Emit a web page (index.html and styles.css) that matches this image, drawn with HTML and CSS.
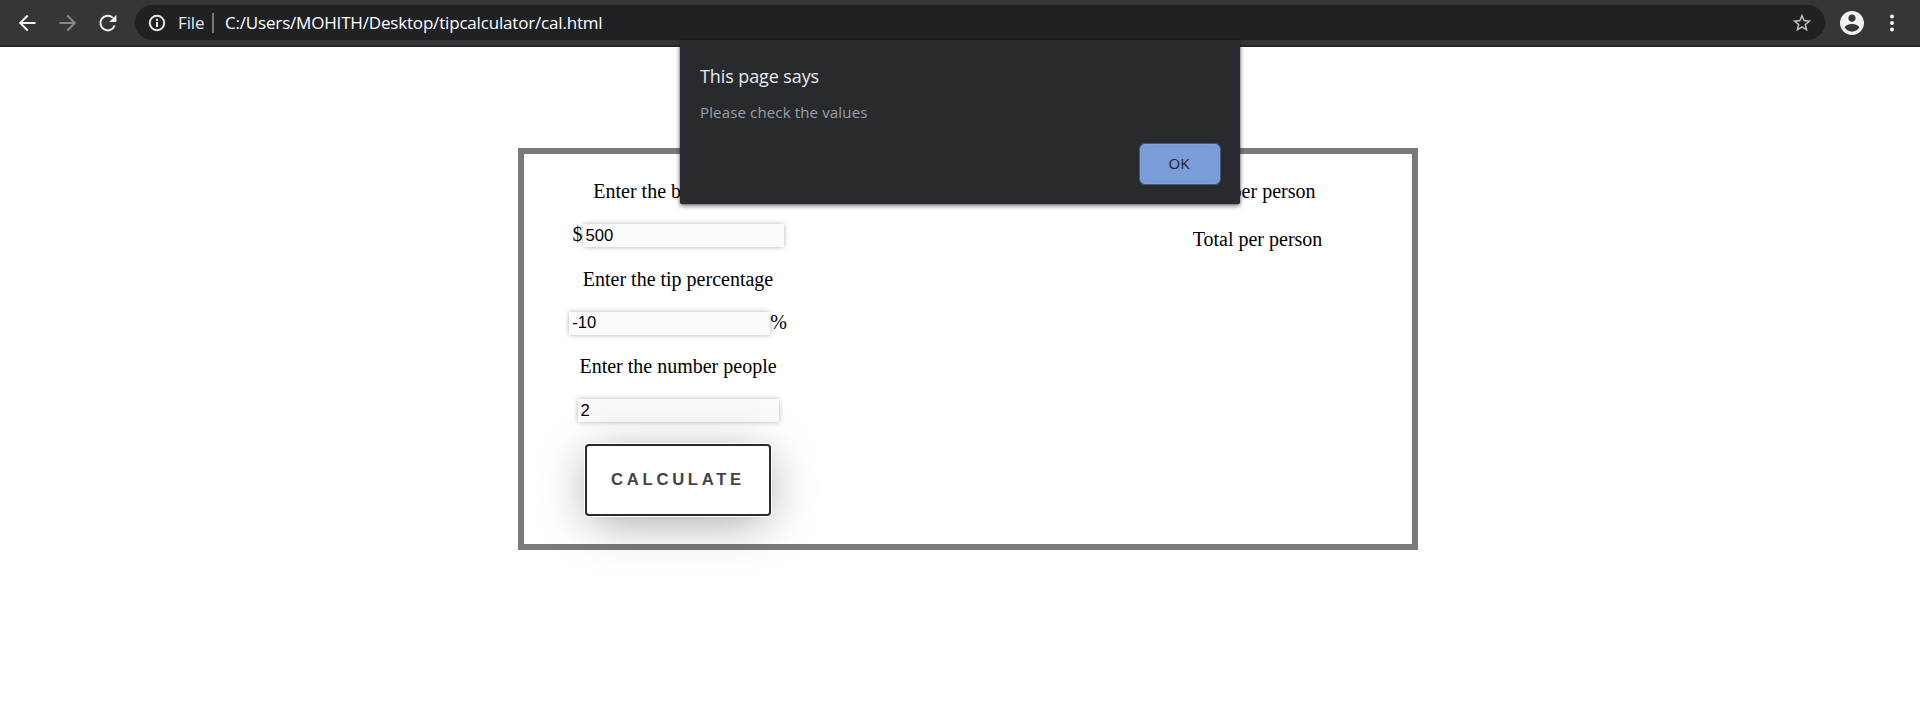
FILE: index.html
```html
<!DOCTYPE html>
<html lang="en">
<head>
<meta charset="utf-8">
<title>Tip calculator</title>
<link rel="stylesheet" href="styles.css">
</head>
<body>
<header class="toolbar">
  <svg class="nav" viewBox="0 0 20 20"><path d="M18.5 10H3.5M10.7 2.5L3.2 10l7.5 7.5"/></svg>
  <svg class="nav nav-off" viewBox="0 0 20 20"><path d="M2.5 10h15M10.3 2.5l7.5 7.5-7.5 7.5"/></svg>
  <svg class="nav" viewBox="0 0 20 20"><path d="M17.6 12.5a7.3 7.3 0 1 1-1.7-7.6"/><path class="solid" d="M19.4 1.8v7.2h-7.2z"/></svg>
  <div class="omnibox">
    <svg class="info" viewBox="0 0 18 18"><circle cx="9" cy="9" r="7.2"/><path d="M9 8v5M9 4.8v2"/></svg>
    <span class="scheme">File</span>
    <span class="divider"></span>
    <span class="url">C:/Users/MOHITH/Desktop/tipcalculator/cal.html</span>
    <svg class="star" viewBox="0 0 24 24"><path d="M22 9.24l-7.19-.62L12 2 9.19 8.63 2 9.24l5.46 4.73L5.82 21 12 17.27 18.18 21l-1.63-7.03L22 9.24zM12 15.4l-3.76 2.27 1-4.28-3.32-2.88 4.38-.38L12 6.1l1.71 4.04 4.38.38-3.32 2.88 1 4.28L12 15.4z"/></svg>
  </div>
  <svg class="avatar" viewBox="2 2 20 20"><path d="M12 2C6.48 2 2 6.48 2 12s4.48 10 10 10 10-4.48 10-10S17.52 2 12 2zm0 3c1.66 0 3 1.34 3 3s-1.34 3-3 3-3-1.34-3-3 1.34-3 3-3zm0 14.2c-2.5 0-4.71-1.28-6-3.22.03-1.99 4-3.08 6-3.08 1.99 0 5.97 1.09 6 3.08-1.29 1.94-3.5 3.22-6 3.22z"/></svg>
  <svg class="dots" viewBox="0 0 4 18"><circle cx="2" cy="2.5" r="2"/><circle cx="2" cy="9" r="2"/><circle cx="2" cy="15.5" r="2"/></svg>
</header>
<main class="page">
  <section class="card">
    <div class="column">
      <label class="label">Enter the bill amount</label>
      <div class="field"><span>$</span><input class="input" type="text" value="500"></div>
      <label class="label">Enter the tip percentage</label>
      <div class="field"><input class="input" type="text" value="-10"><span>%</span></div>
      <label class="label">Enter the number people</label>
      <div class="field"><input class="input" type="text" value="2"></div>
      <button class="calculate">CALCULATE</button>
    </div>
    <div class="column results">
      <p class="label">Tip per person</p>
      <p class="label">Total per person</p>
    </div>
  </section>
</main>
<div class="dialog">
  <h1 class="dialog-title">This page says</h1>
  <p class="dialog-text">Please check the values</p>
  <button class="ok">OK</button>
</div>
</body>
</html>
```
FILE: styles.css
```css
* { box-sizing: border-box; }
body { margin: 0; height: 720px; overflow: hidden; background: #fff; }
.toolbar {
  display: flex; align-items: center; height: 47px; padding-left: 17px;
  background: #35363a; border-bottom: 2px solid #292a2d;
  font-family: "Open Sans", "Noto Sans", sans-serif; color: #fff;
}
.nav { width: 20px; height: 20px; margin-right: 20px; fill: none; stroke: #f1f3f4; stroke-width: 2; overflow: visible; }
.nav-off { stroke: #87888b; }
.nav .solid { fill: #f1f3f4; stroke: none; }
.nav + .omnibox { margin-left: -2px; }
.omnibox {
  display: flex; align-items: center; width: 1690px; height: 35px;
  padding: 0 12px 0 13px; border-radius: 18px; background: #202124;
}
.info { width: 18px; height: 18px; fill: none; stroke: #e8eaed; stroke-width: 2; }
.scheme { margin-left: 12px; width: 28px; font-size: 17px; letter-spacing: -0.1px; color: #e8eaed; }
.divider { width: 2px; height: 20px; margin: 0 11px 0 6px; background: #77787b; }
.url { font-size: 17px; letter-spacing: -0.18px; white-space: nowrap; }
.star { width: 22px; height: 22px; margin-left: auto; fill: #c4c5c8; }
.avatar { width: 24px; height: 24px; margin-left: 15px; fill: #f1f3f4; }
.dots { width: 4px; height: 18px; margin-left: 26px; fill: #f1f3f4; }

.page { padding: 101px 0 0 518px; font-family: "Liberation Serif", serif; font-size: 20px; color: #000; }
.card {
  display: flex; justify-content: space-between; width: 900px; height: 402px;
  padding-top: 26px; border: 6px solid #7a7a7a;
}
.column { display: flex; flex-direction: column; align-items: center; width: 308px; }
.label { height: 23px; margin: 0 0 20px; line-height: 23px; white-space: nowrap; }
.field { display: flex; height: 25px; margin-bottom: 19.5px; line-height: 23px; }
.input {
  width: 201px; height: 23px; margin: 1px 0 0; padding: 0 3px; border: 0; background: #fafafa;
  box-shadow: 0 0 5px rgba(0, 0, 0, .3);
  font-family: "Liberation Sans", sans-serif; font-size: 16.67px; color: #000;
}
.calculate {
  width: 186px; height: 72px; margin-top: 1px; padding: 0; border: 2px solid #2a2a2c; border-radius: 4px;
  background: #fff; box-shadow: 0 0 0 1px #fff, 0 8px 50px -6px rgba(0, 0, 0, .42);
  font: bold 16.67px "Liberation Sans", sans-serif; letter-spacing: 3.7px; color: #444;
}
.results { width: 309px; }
.results .label { margin-bottom: 25px; }

.dialog {
  position: absolute; left: 680px; top: 40px; width: 560px; height: 164px; padding: 22px 20px 0;
  background: #292a2d; border-radius: 2px; box-shadow: 0 2px 5px rgba(0, 0, 0, .5), 0 0 2px rgba(0, 0, 0, .5);
  font-family: "Open Sans", "Noto Sans", sans-serif;
}
.dialog-title { margin: 0; font-size: 18px; line-height: 28px; font-weight: 400; letter-spacing: -.1px; color: #e8eaed; }
.dialog-text { margin: 10px 0 0; font-size: 15px; line-height: 24px; letter-spacing: .15px; color: #9aa0a6; }
.ok {
  display: block; width: 80px; height: 40px; margin: 20px 0 0 auto; padding: 0 2px 3px 0;
  border: 1px solid #7ea3df; border-radius: 5px; background: #7a9cd8;
  box-shadow: 0 0 0 1px #465675; font: 15px "Open Sans", sans-serif; color: #202124;
}
```
